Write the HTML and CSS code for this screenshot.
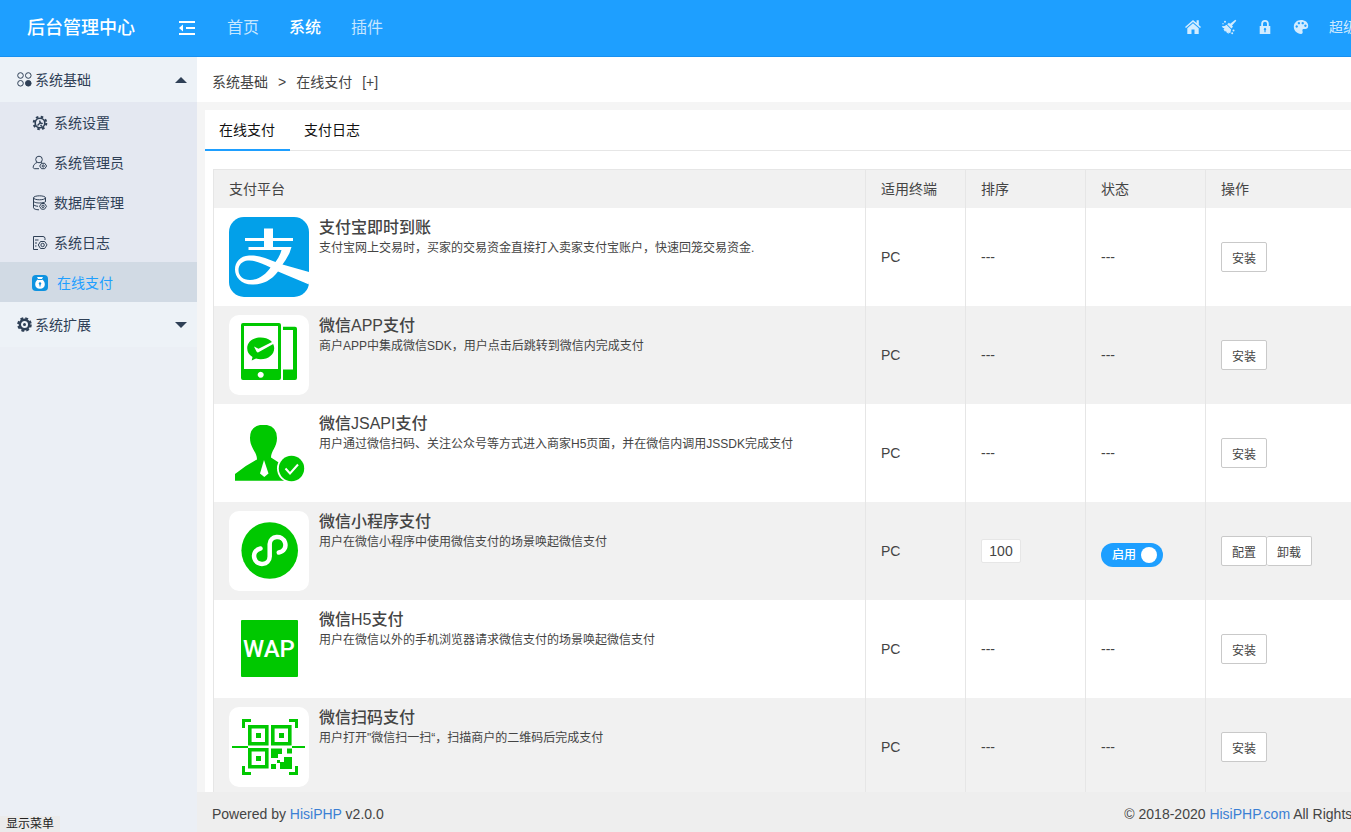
FILE: index.html
```html
<!DOCTYPE html>
<html lang="zh-CN">
<head>
    <meta charset="UTF-8">
    <meta name="viewport" content="width=device-width, initial-scale=1.0">
    <title>在线支付 - 后台管理中心</title>
    <link rel="stylesheet" href="styles.css">
</head>
<body>

<div class="layout">
    <!-- 顶部导航 -->
    <header class="header">
        <div class="logo">后台管理中心</div>
        <nav class="nav">
            <button type="button" class="fold" aria-label="折叠菜单">
                <svg width="16" height="14" viewBox="0 0 16 14" fill="currentColor"><path d="M0 0h16v2H0zM7 6h9v2H7zM0 12h16v2H0zM0 7l4-3.4v6.8z"/></svg>
            </button>
            <a href="#">首页</a>
            <a href="#" class="current">系统</a>
            <a href="#">插件</a>
        </nav>
        <nav class="tools">
            <a href="#" aria-label="前台首页">
                <svg width="16" height="16" viewBox="0 0 16 16" fill="currentColor"><path d="M8 1L0 8l1 1.1L8 3l7 6.1L16 8l-2.2-2V1.200h-2.200v2.900zM8 4.300L2.300 9.300V15H6.500v-4.500h3V15h4.200V9.300z"/></svg>
            </a>
            <a href="#" aria-label="清理缓存">
                <svg width="16" height="16" viewBox="0 0 16 16" fill="currentColor"><path d="M14.300.8l1 .9-4.300 4.900 1 1.200-1.600 1.600-4.200-4.200 1.700-1.500 1.300 1zM5.500 5.800l4.600 4.700-.8 3.700-1.800-.8.3 1.500-2.400-1.600-.4-1.500-.9 1-1.600-2.200 1-1.300L2 9.100.700 7.200 3.600 7z"/><circle cx="4" cy="2.800" r="1"/><circle cx="12.500" cy="11.500" r="1"/><circle cx="11.200" cy="14.300" r="1"/><circle cx="2" cy="4.800" r=".7"/></svg>
            </a>
            <a href="#" aria-label="锁屏">
                <svg width="16" height="16" viewBox="0 0 16 16" fill="currentColor"><path fill-rule="evenodd" d="M2.700 7h1.500V4.800a3.800 3.800 0 0 1 7.600 0V7h1.500v8H2.700zm3.300 0h4V4.800a2 2 0 0 0-4 0zm1.400 4.200v2h1.200v-2a1.200 1.200 0 1 0-1.200 0z"/></svg>
            </a>
            <a href="#" aria-label="主题">
                <svg width="16" height="16" viewBox="0 0 16 16" fill="currentColor"><path fill-rule="evenodd" d="M8 1c4 0 7.200 2.400 7.200 5.800 0 2.300-1.500 3.500-3.400 3.300-2-.2-2.800.4-2.300 1.800.5 1.500.2 2.900-1.500 3C3.900 14.800.8 11.600.8 7.800.8 3.900 4 1 8 1zM3.700 6.300a1.200 1.200 0 1 0 .01 0zM5.900 2.900a1.200 1.200 0 1 0 .01 0zM9.700 2.900a1.200 1.200 0 1 0 .01 0zM12.400 5.500a1.200 1.200 0 1 0 .01 0z"/></svg>
            </a>
            <a href="#">超级管理员</a>
        </nav>
    </header>

    <div class="body">
        <!-- 左侧菜单 -->
        <aside class="side">
            <a href="#" class="side-title">
                <svg width="15" height="15" viewBox="0 0 15 15" fill="none" stroke="currentColor"><circle cx="3.500" cy="3.500" r="2.800"/><circle cx="11.300" cy="3.500" r="2.800"/><circle cx="3.500" cy="11.300" r="2.800"/><circle cx="11.300" cy="11.300" r="2.800" fill="currentColor"/></svg>
                <span>系统基础</span>
                <i class="arrow up"></i>
            </a>
            <ul class="side-list">
                <li><a href="#">
                    <svg width="16" height="16" viewBox="0 0 16 16" fill="none" stroke="currentColor"><circle cx="8" cy="8" r="4.800" stroke-width="1.600"/><circle cx="8" cy="8" r="6.300" stroke-width="2" stroke-dasharray="2.500 2.450"/><path d="M5.500 10.500L9 7M8 5.500a2 2 0 0 0 2.700 2.700M8.500 10l1.500 1.500" stroke-width="1.400"/></svg>
                    <span>系统设置</span>
                </a></li>
                <li><a href="#">
                    <svg width="16" height="16" viewBox="0 0 16 16" fill="none" stroke="currentColor"><circle cx="7" cy="4.500" r="3.300"/><path d="M5 7.500C2.500 8.500 1.200 10.500 1.200 12.200c0 1 .6 1.500 1.600 1.500H7M9 7.500l1 .5"/><path d="M9.500 8.300h3.300l1.800 2.700-1.800 2.700H9.500L7.700 11z"/><circle cx="11.200" cy="11" r="1.100"/></svg>
                    <span>系统管理员</span>
                </a></li>
                <li><a href="#">
                    <svg width="16" height="16" viewBox="0 0 16 16" fill="none" stroke="currentColor"><ellipse cx="7.500" cy="2.800" rx="6" ry="2"/><path d="M1.500 2.800v10c0 1.100 2.500 2 5.500 2M13.500 2.800v4M1.500 6c0 1.200 2.700 2 6 2 2.500 0 5-.5 6-1.300M1.500 9.300c0 1 2 1.800 4.500 2"/><path d="M9.500 8.500h3l2 2.800-2 2.900h-3l-2-2.900z"/><circle cx="11" cy="11.300" r="1.200"/></svg>
                    <span>数据库管理</span>
                </a></li>
                <li><a href="#">
                    <svg width="16" height="16" viewBox="0 0 16 16" fill="none" stroke="currentColor"><path d="M6 14.500H1.500v-13h9.500q2 0 2 2V5M3 5h3.500M3 8h2M3 11h1.500"/><path d="M8.500 6.500h4.200l2.300 3.400-2.300 3.600H8.500L6.300 10z"/><circle cx="10.600" cy="10" r="1.700"/></svg>
                    <span>系统日志</span>
                </a></li>
                <li><a href="#" class="active">
                    <svg class="icon-app" width="16" height="16" viewBox="0 0 16 16"><rect width="16" height="16" rx="4" fill="#0f93e0"/><path d="M5 2h6L9.800 4.300c2 1 3 3 3 5.200 0 2.600-1.800 4.300-4.800 4.300s-4.800-1.700-4.800-4.300c0-2.200 1-4.200 3-5.200z" fill="#fff"/><path d="M6 4.500h4M7 8.500h1v3" stroke="#0f93e0" fill="none"/><circle cx="8" cy="8.500" r="1.200" fill="#0f93e0"/></svg>
                    <span>在线支付</span>
                </a></li>
            </ul>
            <a href="#" class="side-title">
                <svg width="15" height="15" viewBox="0 0 15 15" fill="none" stroke="currentColor"><circle cx="7.500" cy="7.500" r="4.700" stroke-width="2.400"/><circle cx="7.500" cy="7.500" r="6.300" stroke-width="2" stroke-dasharray="2.900 2.050"/><circle cx="7.500" cy="7.500" r="1.500" fill="currentColor" stroke="none"/></svg>
                <span>系统扩展</span>
                <i class="arrow down"></i>
            </a>
        </aside>

        <div class="main">
            <div class="crumb">
                <a href="#">系统基础</a>
                <span>&gt;</span>
                <a href="#">在线支付</a>
                <a href="#">[+]</a>
            </div>

            <div class="content">
                <section class="card">
                    <div class="tabs">
                        <a href="#" class="tab on">在线支付</a>
                        <a href="#" class="tab">支付日志</a>
                    </div>

                    <div class="table-wrap">
                        <table class="table">
                            <colgroup>
                                <col>
                                <col class="w100">
                                <col class="w120">
                                <col class="w120">
                                <col class="w218">
                            </colgroup>
                            <thead>
                                <tr>
                                    <th>支付平台</th>
                                    <th>适用终端</th>
                                    <th>排序</th>
                                    <th>状态</th>
                                    <th>操作</th>
                                </tr>
                            </thead>
                            <tbody>
                                <!-- 支付宝 -->
                                <tr>
                                    <td>
                                        <div class="pay">
                                            <svg class="pay-icon alipay" viewBox="0 0 80 80"><path fill="#fff" fill-rule="evenodd" d="M35 11.500H44V21H64V24H44V30H62.500L60.500 36Q57 43 53.500 47.500L80 55V67.500L49 54.500C42 64 33 67.500 23 67.500C12 67.500 6 60 6 52.500C6 45 11 39 20 38.500C30 38 38 42 46.500 45C49.500 41 51.500 37 52.500 33H19.500V30H35V24H16V21H35ZM41.500 50.500C34 47 27 43 19 43.500C13 44 9.500 48 9.500 53C9.500 59 14 63 21 63C29 63 36.500 58 41.500 50.500Z"/></svg>
                                            <div class="pay-text">
                                                <h3>支付宝即时到账</h3>
                                                <p>支付宝网上交易时，买家的交易资金直接打入卖家支付宝账户，快速回笼交易资金.</p>
                                            </div>
                                        </div>
                                    </td>
                                    <td>PC</td>
                                    <td>---</td>
                                    <td>---</td>
                                    <td><div class="btns"><button type="button">安装</button></div></td>
                                </tr>
                                <!-- 微信APP -->
                                <tr>
                                    <td>
                                        <div class="pay">
                                            <svg class="pay-icon" viewBox="0 0 80 80"><path fill="#00c800" fill-rule="evenodd" d="M14 8H50Q52 8 52 10V63Q52 65 50 65H14Q12 65 12 63V10Q12 8 14 8ZM15 11V54H49V11ZM31.700 56.700A3 3 0 1 0 31.710 56.700ZM54 11.700H66Q68 11.700 68 13.700V63Q68 65 66 65H54V54.500H64V15H54Z"/><path fill="#00c800" d="M31.700 22.500C39.500 22.500 45.200 27 45.200 33.300S39.500 44.300 31.700 44.300Q29 44.300 27 43.600L22.700 45.500 23.500 42Q18.200 39 18.200 33.300C18.200 27 24 22.500 31.700 22.500Z"/><path fill="#fff" d="M25 31.500L29.500 33.700 46 25.500V28L29 37.500Q28 37.500 27.500 36.500Z"/></svg>
                                            <div class="pay-text">
                                                <h3>微信APP支付</h3>
                                                <p>商户APP中集成微信SDK，用户点击后跳转到微信内完成支付</p>
                                            </div>
                                        </div>
                                    </td>
                                    <td>PC</td>
                                    <td>---</td>
                                    <td>---</td>
                                    <td><div class="btns"><button type="button">安装</button></div></td>
                                </tr>
                                <!-- 微信JSAPI -->
                                <tr>
                                    <td>
                                        <div class="pay">
                                            <svg class="pay-icon" viewBox="0 0 80 80"><path fill="#00c800" d="M31 12H38Q48 14 48 25C48 34 42 38 42 44.500L52 51 58 67.700H6V61Q17 52 28 46.500C28 39 21 35 21 25Q21 14 31 12Z"/><path fill="#fff" d="M35 47L39.500 60.500 35.300 64 31 60.500Z"/><circle cx="62.500" cy="55.500" r="14.500" fill="#fff"/><circle cx="62.500" cy="55.500" r="12.700" fill="#00c800"/><path d="M56.500 55.500L61 60.500 69 51.500" fill="none" stroke="#fff" stroke-width="2"/></svg>
                                            <div class="pay-text">
                                                <h3>微信JSAPI支付</h3>
                                                <p>用户通过微信扫码、关注公众号等方式进入商家H5页面，并在微信内调用JSSDK完成支付</p>
                                            </div>
                                        </div>
                                    </td>
                                    <td>PC</td>
                                    <td>---</td>
                                    <td>---</td>
                                    <td><div class="btns"><button type="button">安装</button></div></td>
                                </tr>
                                <!-- 微信小程序 -->
                                <tr>
                                    <td>
                                        <div class="pay">
                                            <svg class="pay-icon" viewBox="0 0 80 80"><circle cx="40.700" cy="39.500" r="28.300" fill="#00c800"/><path d="M49.800 41.500C55 40.500 57.500 36 56 31.500C53.500 23.500 40.900 24.500 40.700 33V45.500C40.500 54.500 28 55.500 25.500 47.500C24 43 26.500 38.500 31.500 37.500" fill="none" stroke="#fff" stroke-width="4.500" stroke-linecap="round"/></svg>
                                            <div class="pay-text">
                                                <h3>微信小程序支付</h3>
                                                <p>用户在微信小程序中使用微信支付的场景唤起微信支付</p>
                                            </div>
                                        </div>
                                    </td>
                                    <td>PC</td>
                                    <td><input type="text" class="sort" value="100" aria-label="排序"></td>
                                    <td><label class="switch">启用<input type="checkbox" checked></label></td>
                                    <td><div class="btns"><button type="button">配置</button><button type="button">卸载</button></div></td>
                                </tr>
                                <!-- 微信H5 -->
                                <tr>
                                    <td>
                                        <div class="pay">
                                            <svg class="pay-icon" viewBox="0 0 80 80"><rect x="12" y="11" width="57" height="57" rx="1" fill="#00c800"/><text class="wap" x="40" y="48" text-anchor="middle">WAP</text></svg>
                                            <div class="pay-text">
                                                <h3>微信H5支付</h3>
                                                <p>用户在微信以外的手机浏览器请求微信支付的场景唤起微信支付</p>
                                            </div>
                                        </div>
                                    </td>
                                    <td>PC</td>
                                    <td>---</td>
                                    <td>---</td>
                                    <td><div class="btns"><button type="button">安装</button></div></td>
                                </tr>
                                <!-- 微信扫码 -->
                                <tr>
                                    <td>
                                        <div class="pay">
                                            <svg class="pay-icon" viewBox="0 0 80 80"><g fill="none" stroke="#00c800" stroke-width="3"><path d="M14.500 21V13.500H22M60 13.500H67.500V21M67.500 59V66.500H60M22 66.500H14.500V59"/><path stroke-width="3.600" d="M20.800 19.800H37.800V36.800H20.800ZM43.800 19.800H60.800V36.800H43.800ZM20.800 42.800H37.800V59.800H20.800Z"/><path stroke-width="2" d="M3 40H19M63 40H76"/></g><path fill="#00c800" d="M27 26h5v5h-5zM50 26h5v5h-5zM27 49h5v5h-5zM42 41.500H53V47H49V51H42ZM58 41.500H63V46.500H58ZM55 50H63V62H51V55H55ZM42 57H47V62H42ZM48 53H51V56H48Z"/></svg>
                                            <div class="pay-text">
                                                <h3>微信扫码支付</h3>
                                                <p>用户打开"微信扫一扫“，扫描商户的二维码后完成支付</p>
                                            </div>
                                        </div>
                                    </td>
                                    <td>PC</td>
                                    <td>---</td>
                                    <td>---</td>
                                    <td><div class="btns"><button type="button">安装</button></div></td>
                                </tr>
                            </tbody>
                        </table>
                    </div>
                </section>
            </div>

            <footer class="footer">
                <span>Powered by <a href="#">HisiPHP</a> v2.0.0</span>
                <span>© 2018-2020 <a href="#">HisiPHP.com</a> All Rights Reserved.</span>
            </footer>
        </div>
    </div>
</div>

<div class="status">显示菜单</div>

</body>
</html>
```

FILE: styles.css
```css
/* 全局 */
* {
    box-sizing: border-box;
}

html {
    overflow: hidden;
}

body {
    margin: 0;
    font: 14px/20px "Liberation Sans", "Noto Sans CJK SC", sans-serif;
    color: #444;
    background-color: #f5f5f5;
}

a {
    color: inherit;
    text-decoration: none;
}

button, input {
    font-family: inherit;
    color: inherit;
}

svg {
    display: block;
    flex: none;
}

/* 后台最小宽度，窄屏时右侧被裁掉 */
.layout {
    display: flex;
    flex-direction: column;
    min-width: 1440px;
    height: 100vh;
}

/* 顶部 */
.header {
    display: flex;
    align-items: center;
    flex: none;
    height: 57px;
    color: #fff;
    background-color: #1e9fff;
    border-bottom: 1px solid #1890f0;
}

.logo {
    width: 164px;
    padding-left: 27px;
    font-size: 18px;
    font-weight: 500;
}

.nav, .tools {
    display: flex;
    align-items: center;
    font-size: 16px;
}

.nav a, .fold {
    padding: 0 15px;
    color: rgba(255, 255, 255, 0.75);
}

.fold {
    margin-right: 2px;
    border: none;
    background: none;
    color: #fff;
    cursor: pointer;
}

.nav .current {
    color: #fff;
    font-weight: 500;
}

.tools {
    gap: 20px;
    margin-left: auto;
    padding: 0 41px 2px 0;
    font-size: 14px;
    color: rgba(255, 255, 255, 0.8);
}

.body {
    display: flex;
    flex: 1;
    min-height: 0;
}

/* 左侧菜单 */
.side {
    flex: none;
    width: 197px;
    color: #2f4056;
    background-color: #ebeff5;
}

.side-title {
    display: flex;
    align-items: center;
    gap: 3px;
    height: 45px;
    padding: 0 10px 0 17px;
    background-color: #edf2f7;
}

.arrow {
    margin-left: auto;
    border: 6px solid transparent;
}

.arrow.up {
    border-top: none;
    border-bottom-color: #2f4056;
}

.arrow.down {
    border-bottom: none;
    border-top-color: #2f4056;
}

.side-list {
    margin: 0;
    padding: 0;
    list-style: none;
    background-color: #e4e8f1;
}

.side-list a {
    display: flex;
    align-items: center;
    gap: 6px;
    height: 40px;
    padding: 1px 0 0 32px;
}

.side-list .active {
    color: #1e9fff;
    background-color: #d1dae4;
}

.icon-app {
    margin-right: 3px;
}

/* 主体 */
.main {
    display: flex;
    flex-direction: column;
    flex: 1;
    min-width: 0;
}

.crumb {
    display: flex;
    align-items: center;
    flex: none;
    gap: 10px;
    height: 45px;
    padding: 4px 15px 0;
    background-color: #fff;
}

.content {
    flex: 1;
    min-height: 0;
    padding: 8px 8px 0;
    overflow: hidden;
}

.card {
    background-color: #fff;
}

.tabs {
    display: flex;
    height: 41px;
    border-bottom: 1px solid #e6e6e6;
}

.tab {
    height: 41px;
    padding: 0 15px 0 14px;
    line-height: 40px;
    color: #111;
}

.tab.on {
    border-bottom: 2px solid #1e9fff;
}

.table-wrap {
    padding: 18px 8px 8px;
}

/* 表格 */
.table {
    width: 100%;
    table-layout: fixed;
    border-spacing: 0;
    border: 1px solid #e6e6e6;
    border-right: none;
}

.w100 {
    width: 100px;
}

.w120 {
    width: 120px;
}

.w218 {
    width: 218px;
}

.table th, .table td {
    padding: 9px 15px;
    text-align: left;
    font-weight: normal;
    border-right: 1px solid #e6e6e6;
}

.table thead, .table tbody tr:nth-child(even) {
    background-color: #f1f1f1;
}

.pay {
    display: flex;
    gap: 10px;
}

.pay-icon {
    width: 80px;
    height: 80px;
    border-radius: 10px;
    background-color: #fff;
}

.pay-icon.alipay {
    border-radius: 15px;
    background-color: #02a0e9;
}

.wap {
    font: 500 24px Roboto, sans-serif;
    fill: #fff;
}

.pay-text {
    padding-top: 1px;
}

.pay h3, .pay p {
    margin: 0;
    line-height: 20px;
}

.pay h3 {
    font-size: 16px;
    font-weight: 500;
}

.pay p {
    font-size: 12px;
}

.btns {
    display: flex;
}

.btns button {
    height: 30px;
    padding: 0 10px;
    font-size: 12px;
    border: 1px solid #c9c9c9;
    border-radius: 2px;
    background-color: #fff;
    cursor: pointer;
}

.btns button + button {
    border-left: none;
}

.sort {
    display: block;
    width: 40px;
    height: 24px;
    padding: 0;
    font-size: 14px;
    text-align: center;
    border: 1px solid #e6e6e6;
    border-radius: 2px;
}

.switch {
    display: flex;
    align-items: center;
    justify-content: space-between;
    width: 62px;
    height: 24px;
    margin-top: 8px;
    padding: 0 6px 0 11px;
    font-size: 12px;
    font-weight: 500;
    color: #fff;
    border-radius: 12px;
    background-color: #1e9fff;
}

.switch input {
    width: 16px;
    height: 16px;
    margin: 0;
    appearance: none;
    border-radius: 50%;
    background-color: #fff;
}

/* 底部 */
.footer {
    display: flex;
    align-items: center;
    justify-content: space-between;
    flex: none;
    height: 40px;
    padding: 4px 20px 0 15px;
    background-color: #eee;
}

.footer a {
    color: #3b7fd4;
}

.status {
    position: absolute;
    left: 0;
    bottom: 0;
    padding: 0 6px;
    font-size: 12px;
    line-height: 16px;
    color: #222;
    background-color: #ebebeb;
}
```
